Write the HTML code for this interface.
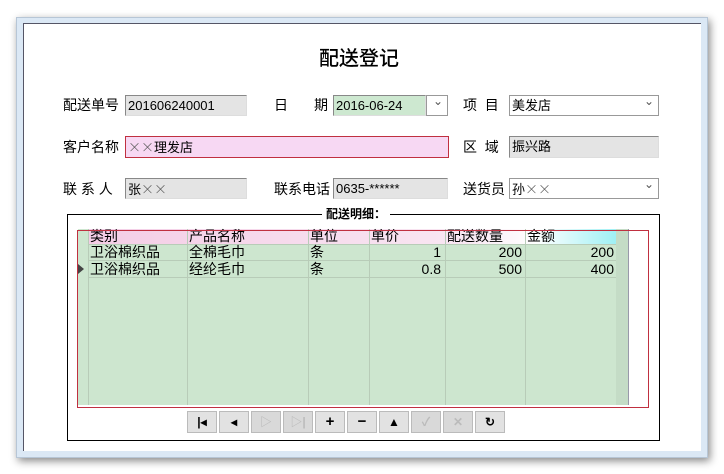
<!DOCTYPE html>
<html><head><meta charset="utf-8"><style>
body{margin:0;width:724px;height:474px;background:#fff;position:relative;overflow:hidden;font-family:"Liberation Sans","Noto Sans CJK SC",sans-serif;font-size:14px;color:#000}
.a{position:absolute}
.x{font-family:"Noto Sans CJK SC",sans-serif;font-weight:300;color:#555}
.win{left:16px;top:17px;width:692px;height:441px;background:#dbe8f5;box-shadow:2px 3px 8px #888;border:1px solid #b7c6d6;box-sizing:border-box}
.in{left:23px;top:23px;width:677px;height:427px;background:#fff;border-left:1px solid #556;border-top:1px solid #556}
.f{position:absolute;box-sizing:border-box;border:1px solid #888;border-right-color:#ddd;border-bottom-color:#ddd;background:#e4e4e4;font-size:13px;line-height:19px;padding-left:2px;white-space:nowrap;overflow:hidden}
.lbl{position:absolute;font-size:14px;line-height:20px}
.cb{background:#fff;border:1px solid #999}
.cb:after{content:"⌄";position:absolute;right:4px;top:-4px;font-size:12px;color:#555}
.c{position:absolute;top:0;height:100%;border-left:1px solid #b8ccb8}
.row{position:absolute;left:88px;width:528px;height:16px;border-bottom:1px solid #b8ccb8;font-size:14px;line-height:16px}
.row span{position:absolute;top:0}
.btn{position:absolute;top:411px;width:30px;height:22px;box-sizing:border-box;border:1px solid #bbb;background:#e2e2e2;font-size:12px;text-align:center;line-height:20px;font-weight:bold}
.dis{color:#bbb;background:#d9d9d9}
</style></head><body>
<div class="a win"></div>
<div class="a in"></div>
<div class="a" style="left:319px;top:47px;font-size:20px;line-height:24px;font-weight:500">配送登记</div>

<div class="lbl" style="left:63px;top:95px">配送单号</div>
<div class="f" style="left:125px;top:95px;width:122px;height:21px">201606240001</div>
<div class="lbl" style="left:274px;top:95px">日</div>
<div class="lbl" style="left:314px;top:95px">期</div>
<div class="f" style="left:333px;top:95px;width:93px;height:21px;background:#cde8d0">2016-06-24</div>
<div class="f cb" style="left:426px;top:95px;width:22px;height:21px"></div>
<div class="lbl" style="left:463px;top:95px">项&nbsp;&nbsp;目</div>
<div class="f cb" style="left:509px;top:95px;width:150px;height:21px">美发店</div>

<div class="lbl" style="left:63px;top:137px">客户名称</div>
<div class="f" style="left:125px;top:136px;width:324px;height:22px;background:#f7d8f3;border:1px solid #c03040"><span class="x">××</span>理发店</div>
<div class="lbl" style="left:463px;top:137px">区&nbsp;&nbsp;域</div>
<div class="f" style="left:509px;top:136px;width:150px;height:22px">振兴路</div>

<div class="lbl" style="left:63px;top:179px">联 系 人</div>
<div class="f" style="left:125px;top:178px;width:122px;height:21px">张<span class="x">××</span></div>
<div class="lbl" style="left:274px;top:179px">联系电话</div>
<div class="f" style="left:333px;top:178px;width:115px;height:21px">0635-******</div>
<div class="lbl" style="left:463px;top:179px">送货员</div>
<div class="f cb" style="left:509px;top:178px;width:150px;height:21px">孙<span class="x">××</span></div>

<div class="a" style="left:67px;top:214px;width:593px;height:227px;border:1px solid #000;box-sizing:border-box"></div>
<div class="a" style="left:322px;top:206px;background:#fff;padding:0 4px;font-size:12px;font-weight:bold;line-height:16px">配送明细：</div>

<div class="a" style="left:78px;top:229px;width:550px;height:176px;background:#cde6cf"></div>
<div class="a" style="left:616px;top:229px;width:12px;height:176px;background:#c4dcc6;border-right:1px solid #99a"></div>
<div class="a" style="left:88px;top:229px;width:528px;height:15px;background:linear-gradient(90deg,#f4cde6 0,#f8e6f2 70%,#fff 85%,#9ff0f4 100%);border-bottom:1px solid #999"></div>
<div class="a" style="left:88px;top:229px;width:528px;height:176px">
<div class="c" style="left:0"></div><div class="c" style="left:99px"></div><div class="c" style="left:220px"></div><div class="c" style="left:281px"></div><div class="c" style="left:357px"></div><div class="c" style="left:437px"></div>
</div>
<div class="row" style="top:229px;height:15px;line-height:15px"><span style="left:2px">类别</span><span style="left:101px">产品名称</span><span style="left:222px">单位</span><span style="left:283px">单价</span><span style="left:359px">配送数量</span><span style="left:439px">金额</span></div>
<div class="row" style="top:244px"><span style="left:2px">卫浴棉织品</span><span style="left:101px">全棉毛巾</span><span style="left:222px">条</span><span style="right:175px">1</span><span style="right:94px">200</span><span style="right:2px">200</span></div>
<div class="row" style="top:261px"><span style="left:2px">卫浴棉织品</span><span style="left:101px">经纶毛巾</span><span style="left:222px">条</span><span style="right:175px">0.8</span><span style="right:94px">500</span><span style="right:2px">400</span></div>
<div class="a" style="left:78px;top:264px;width:0;height:0;border-left:6px solid #444;border-top:5px solid transparent;border-bottom:5px solid transparent"></div>
<div class="a" style="left:77px;top:230px;width:572px;height:178px;border:1px solid #c03040;box-sizing:border-box"></div>

<div class="btn" style="left:187px">|◂</div>
<div class="btn" style="left:219px">◂</div>
<div class="btn dis" style="left:251px">▷</div>
<div class="btn dis" style="left:283px">▷|</div>
<div class="btn" style="left:315px;font-size:15px">+</div>
<div class="btn" style="left:347px;font-size:15px">−</div>
<div class="btn" style="left:379px">▲</div>
<div class="btn dis" style="left:411px">✓</div>
<div class="btn dis" style="left:443px">✕</div>
<div class="btn" style="left:475px">↻</div>
</body></html>
